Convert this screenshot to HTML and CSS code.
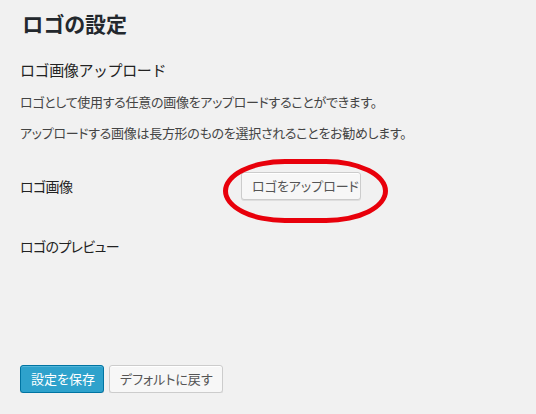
FILE: index.html
```html
<!DOCTYPE html>
<html lang="ja">
<head>
<meta charset="utf-8">
<title>ロゴの設定</title>
<link rel="stylesheet" href="styles.css">
</head>
<body>
<div class="wrap">
  <h1 class="title">ロゴの設定</h1>
  <h2 class="subtitle">ロゴ画像アップロード</h2>
  <p class="desc">ロゴとして使用する任意の画像をアップロードすることができます。</p>
  <p class="desc">アップロードする画像は長方形のものを選択されることをお勧めします。</p>
  <div class="form-table">
    <div class="row row-upload">
      <div class="th">ロゴ画像</div>
      <div class="td">
        <span class="upload-wrap">
          <button class="button" type="button">ロゴをアップロード</button>
          <span class="highlight"></span>
        </span>
      </div>
    </div>
    <div class="row row-preview">
      <div class="th">ロゴのプレビュー</div>
      <div class="td"></div>
    </div>
  </div>
  <div class="submit">
    <button class="button button-primary" type="button">設定を保存</button>
    <button class="button" type="button">デフォルトに戻す</button>
  </div>
</div>
</body>
</html>
```

FILE: styles.css
```css
html, body {
  margin: 0;
  padding: 0;
  background: #f1f1f1;
}
body {
  font-family: "Noto Sans CJK JP", "Noto Sans", sans-serif;
  color: #444;
  font-feature-settings: "palt";
}
.wrap {
  padding: 9px 20px 0 22px;
}
.title {
  margin: 0;
  font-size: 21px;
  line-height: 29px;
  font-weight: 700;
  color: #23282d;
}
.subtitle {
  margin: 22px 0 0 -2px;
  font-size: 15px;
  line-height: 20px;
  font-weight: 400;
  color: #222;
  font-feature-settings: normal;
  letter-spacing: -0.4px;
}
.desc {
  margin: 13px 0 0 -2px;
  font-size: 13px;
  line-height: 18px;
  color: #444;
  letter-spacing: -0.3px;
}
.desc + .desc {
  margin-top: 13px;
}
.form-table {
  margin-top: 30px;
  margin-left: -2px;
}
.row {
  display: flex;
  align-items: center;
}
.row-preview {
  margin-top: 36px;
}
.th {
  width: 220px;
  flex: none;
  font-size: 14px;
  line-height: 20px;
  color: #222;
  letter-spacing: -0.6px;
}
.td {
  flex: 1;
}
.upload-wrap {
  position: relative;
  display: inline-block;
  margin-left: 1px;
}
.button {
  display: inline-block;
  box-sizing: border-box;
  height: 28px;
  margin: 0;
  padding: 0 10px 1px;
  font-family: inherit;
  font-feature-settings: "palt";
  font-size: 13px;
  line-height: 26px;
  color: #555;
  background: #f7f7f7;
  border: 1px solid #ccc;
  border-radius: 3px;
  box-shadow: inset 0 1px 0 #fff, 0 1px 0 rgba(0,0,0,.08);
  white-space: nowrap;
  vertical-align: top;
}
.upload-wrap .button {
  width: 120px;
}
.highlight {
  position: absolute;
  left: -18px;
  top: -13px;
  width: 165px;
  height: 64px;
  box-sizing: border-box;
  border: 5px solid #e8000b;
  border-radius: 62px / 32px;
  pointer-events: none;
}
.submit {
  margin-top: 109px;
  margin-left: -2px;
  display: flex;
  gap: 5px;
}
.button-primary {
  width: 84px;
  background: #2ea2cc;
  border-color: #0074a2;
  color: #fff;
  box-shadow: inset 0 1px 0 rgba(120,200,230,.5), 0 1px 0 rgba(0,0,0,.15);
}
.submit .button:not(.button-primary) {
  width: 114px;
}
```
